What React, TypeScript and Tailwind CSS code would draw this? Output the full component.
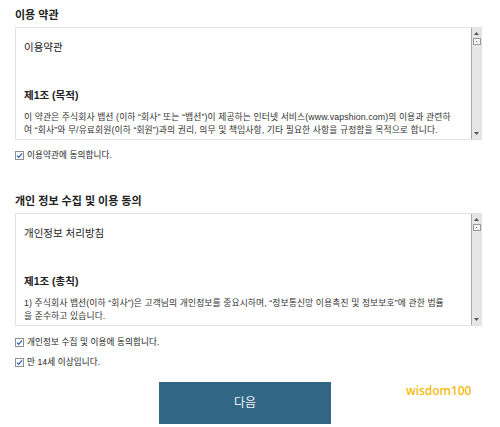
import React from "react";

function Check({ label }: { label: string }) {
  return (
    <div className="flex items-center gap-[3px]">
      <span className="flex h-[9px] w-[9px] shrink-0 items-center justify-center border border-[#8e8f8f] bg-white">
        <svg width="7" height="7" viewBox="0 0 7 7" aria-hidden>
          <path d="M1 3.6 L2.7 5.3 L6 1.4" fill="none" stroke="#2d5fb3" strokeWidth="1.3" />
        </svg>
      </span>
      <span className="whitespace-nowrap text-[8.6px] leading-[14px] tracking-[0.1px] text-[#222]">{label}</span>
    </div>
  );
}

/** Old-style scroll bar drawn beside the text, like the one in the screenshot. */
function ScrollBar() {
  return (
    <div className="flex w-[10px] shrink-0 flex-col items-center border-l border-[#a8a8a8] bg-[#e6e6e6]">
      <svg className="mt-[4px]" width="5" height="3" viewBox="0 0 5 3" aria-hidden>
        <path d="M0 3 L2.5 0 L5 3 Z" fill="#555" />
      </svg>
      <span className="mt-[3px] flex h-[7px] w-[8px] items-center justify-center border border-[#9a9a9a] bg-[#f6f6f6]">
        <span className="h-px w-px bg-[#666]" />
      </span>
      <span className="flex-1" />
      <svg className="mb-[4px]" width="5" height="3" viewBox="0 0 5 3" aria-hidden>
        <path d="M0 0 L2.5 3 L5 0 Z" fill="#555" />
      </svg>
    </div>
  );
}

function TermsBox({ title, article, lines }: { title: string; article: string; lines: string[] }) {
  return (
    <div className="mt-1 flex h-[113px] w-[467px] border border-[#e2e2e2] bg-white">
      <div className="flex-1 overflow-hidden pl-2 pt-[12px] text-[#222]">
        <p className="text-[10.5px] leading-[14px]">{title}</p>
        <p className="mt-[34px] text-[10.5px] font-bold leading-[14px]">{article}</p>
        <p className="mt-[9px] text-[8.8px] leading-[13px] tracking-[0.1px] whitespace-nowrap text-[#333]">
          {lines.map((l, i) => (
            <React.Fragment key={i}>
              {i > 0 && <br />}
              {l}
            </React.Fragment>
          ))}
        </p>
      </div>
      <ScrollBar />
    </div>
  );
}

export default function App() {
  return (
    <div className="relative h-[427px] w-[500px] overflow-hidden bg-white pl-[15px] pt-[7px] font-['Liberation_Sans','Noto_Sans_CJK_KR',sans-serif]">
      <h2 className="text-[11px] font-bold leading-4 text-[#222]">이용 약관</h2>
      <TermsBox
        title="이용약관"
        article="제1조 (목적)"
        lines={[
          "이 약관은 주식회사 뱁션 (이하 “회사” 또는 “뱁션”)이 제공하는 인터넷 서비스(www.vapshion.com)의 이용과 관련하",
          "여 “회사”와 무/유료회원(이하 “회원”)과의 권리, 의무 및 책임사항, 기타 필요한 사항을 규정함을 목적으로 합니다.",
        ]}
      />
      <div className="mt-[8px]">
        <Check label="이용약관에 동의합니다." />
      </div>

      <h2 className="mt-[31px] text-[11px] font-bold leading-4 text-[#222]">개인 정보 수집 및 이용 동의</h2>
      <TermsBox
        title="개인정보 처리방침"
        article="제1조 (총칙)"
        lines={[
          "1) 주식회사 뱁션(이하 “회사”)은 고객님의 개인정보를 중요시하며, “정보통신망 이용촉진 및 정보보호”에 관한 법률",
          "을 준수하고 있습니다.",
        ]}
      />
      <div className="mt-[9px] flex flex-col gap-[6px]">
        <Check label="개인정보 수집 및 이용에 동의합니다." />
        <Check label="만 14세 이상입니다." />
      </div>

      <button className="ml-[144px] mt-[13px] flex h-[42px] w-[172px] items-center justify-center bg-[#316784] text-[12px] text-[#eef3f6]">
        다음
      </button>

      <span className="absolute left-[406px] top-[383px] font-['Noto_Sans',sans-serif] text-[12px] font-medium leading-4 text-[#f4b800]">
        wisdom100
      </span>
    </div>
  );
}
